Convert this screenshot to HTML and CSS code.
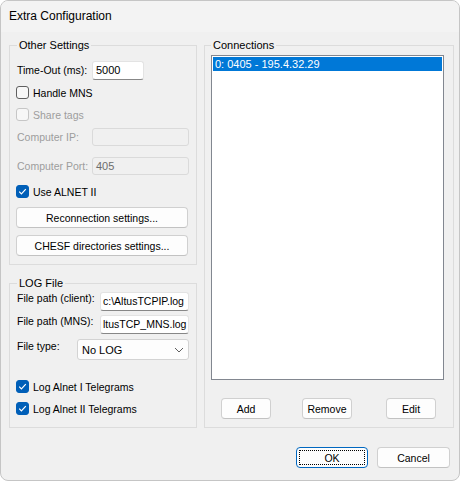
FILE: index.html
```html
<!DOCTYPE html>
<html lang="en">
<head>
  <meta charset="UTF-8" />
  <title>Extra Configuration</title>
  <link rel="stylesheet" href="styles.css">
</head>
<body>
  <div class="window">
    <div class="titlebar">Extra Configuration</div>

    <div class="content">
      <div class="left">
        <fieldset class="other">
          <legend>Other Settings</legend>
          <div class="row timeout">
            <span class="label">Time-Out (ms):</span>
            <div class="field short">5000</div>
          </div>
          <div class="checkrow mns">
            <span class="check"></span>
            <span>Handle MNS</span>
          </div>
          <div class="checkrow share disabled">
            <span class="check off"></span>
            <span>Share tags</span>
          </div>
          <div class="row ip disabled">
            <span class="label">Computer IP:</span>
            <div class="field wide off"></div>
          </div>
          <div class="row port disabled">
            <span class="label">Computer Port:</span>
            <div class="field wide off">405</div>
          </div>
          <div class="checkrow alnet">
            <span class="check on"><svg width="11" height="11" viewBox="0 0 11 11"><path d="M2.2 5.6 L4.4 7.8 L8.8 3.2" fill="none" stroke="#fff" stroke-width="1.2"/></svg></span>
            <span>Use ALNET II</span>
          </div>
          <div class="btn full reconnect">Reconnection settings...</div>
          <div class="btn full chesf">CHESF directories settings...</div>
        </fieldset>

        <fieldset class="log">
          <legend>LOG File</legend>
          <div class="row top client">
            <span class="label path">File path (client):</span>
            <div class="field path-field">c:\AltusTCPIP.log</div>
          </div>
          <div class="row top mnspath">
            <span class="label path">File path (MNS):</span>
            <div class="field path-field">ltusTCP_MNS.log</div>
          </div>
          <div class="row top type">
            <span class="label kind">File type:</span>
            <div class="select">
              <span>No LOG</span>
              <svg width="10" height="6" viewBox="0 0 10 6"><path d="M1 1 L5 5 L9 1" fill="none" stroke="#5f5f5f" stroke-width="1"/></svg>
            </div>
          </div>
          <div class="checkrow alnet1">
            <span class="check on"><svg width="11" height="11" viewBox="0 0 11 11"><path d="M2.2 5.6 L4.4 7.8 L8.8 3.2" fill="none" stroke="#fff" stroke-width="1.2"/></svg></span>
            <span>Log Alnet I Telegrams</span>
          </div>
          <div class="checkrow alnet2">
            <span class="check on"><svg width="11" height="11" viewBox="0 0 11 11"><path d="M2.2 5.6 L4.4 7.8 L8.8 3.2" fill="none" stroke="#fff" stroke-width="1.2"/></svg></span>
            <span>Log Alnet II Telegrams</span>
          </div>
        </fieldset>
      </div>

      <fieldset class="connections">
        <legend>Connections</legend>
        <div class="listbox">
          <div class="item selected">0: 0405 - 195.4.32.29</div>
        </div>
        <div class="list-buttons">
          <div class="btn small add">Add</div>
          <div class="btn small remove">Remove</div>
          <div class="btn small edit">Edit</div>
        </div>
      </fieldset>
    </div>

    <div class="footer">
      <div class="btn ok">OK</div>
      <div class="btn cancel">Cancel</div>
    </div>
  </div>
</body>
</html>
```

FILE: styles.css
```css
body {
  margin: 0;
  background: #fff;
  font-family: "Liberation Sans", Arial, sans-serif;
  font-size: 10.5px;
  color: #000;
}

.window {
  width: 460px;
  height: 481px;
  box-sizing: border-box;
  border: 1px solid #c5c5c5;
  border-radius: 8px;
  background: #f0f0f0;
  overflow: hidden;
}

.titlebar {
  height: 31px;
  line-height: 31px;
  padding-left: 8px;
  background: #f3f3f3;
  font-size: 12px;
}

.content {
  display: grid;
  grid-template-columns: 188px 250px;
  column-gap: 7px;
  padding: 7px 0 0 8px;
}

.left {
  display: flex;
  flex-direction: column;
  gap: 12px;
}

fieldset {
  margin: 0;
  padding: 0 7px;
  border: 1px solid #dcdcdc;
  box-sizing: border-box;
  min-width: 0;
}

legend {
  padding: 0 2px;
  line-height: 13px;
  font-size: 11px;
}

.other {
  height: 226px;
}

.log {
  height: 151px;
}

.connections {
  height: 389px;
  padding: 0 9px 0 6px;
}

/* rows */
.row {
  display: flex;
  align-items: center;
}

.row.top {
  align-items: flex-start;
}

.label {
  width: 75px;
  flex: none;
  line-height: 13px;
}

.label.path {
  width: 83px;
}

.label.kind {
  width: 60px;
  padding-top: 1px;
}

.disabled {
  color: #9d9d9d;
}

.field {
  height: 19px;
  box-sizing: border-box;
  padding-left: 3px;
  line-height: 17px;
  font-size: 11px;
  background: #fff;
  border: 1px solid #e3e3e3;
  border-bottom-color: #878787;
  border-radius: 3px;
  overflow: hidden;
  white-space: nowrap;
}

.field.short {
  width: 52px;
}

.field.wide {
  width: 97px;
  height: 18px;
  line-height: 16px;
}

.field.off {
  background: #f0f0f0;
  border-color: #dadada;
  color: #6d6d6d;
}

.field.path-field {
  width: 89px;
  padding-left: 2px;
  font-size: 10.5px;
}

.select {
  width: 112px;
  height: 21px;
  box-sizing: border-box;
  display: flex;
  align-items: center;
  justify-content: space-between;
  padding: 0 4px 0 4px;
  background: #fdfdfd;
  border: 1px solid #d3d3d3;
  border-radius: 3px;
}

.select span {
  font-size: 11px;
}

/* checkboxes */
.checkrow {
  display: flex;
  align-items: center;
  height: 13px;
}

.check {
  width: 13px;
  height: 13px;
  flex: none;
  box-sizing: border-box;
  margin-left: -1px;
  margin-right: 4px;
  display: flex;
  align-items: center;
  justify-content: center;
  background: #f7f7f7;
  border: 1px solid #5f5f5f;
  border-radius: 3px;
}

.check.off {
  border-color: #c6c6c6;
}

.check.on {
  background: #005fb8;
  border-color: #005fb8;
}

/* buttons */
.btn {
  height: 21px;
  box-sizing: border-box;
  display: flex;
  align-items: center;
  justify-content: center;
  background: #fdfdfd;
  border: 1px solid #d0d0d0;
  border-bottom-color: #c2c2c2;
  border-radius: 4px;
}

.btn.full {
  width: 172px;
  margin-left: -1px;
}

/* vertical spacing, other settings */
.timeout { margin-top: 9px; }
.mns { margin-top: 6px; }
.share { margin-top: 9px; }
.ip { margin-top: 7px; }
.port { margin-top: 11px; }
.alnet { margin-top: 10px; }
.reconnect { margin-top: 9px; }
.chesf { margin-top: 7px; }

/* vertical spacing, log file */
.client { margin-top: 2px; }
.mnspath { margin-top: 4px; }
.type { margin-top: 5px; }
.alnet1 { margin-top: 20px; }
.alnet2 { margin-top: 9px; }

/* connections */
.listbox {
  margin-top: 3px;
  height: 325px;
  box-sizing: border-box;
  padding: 1px;
  background: #fff;
  border: 1px solid #828790;
}

.item {
  height: 14px;
  line-height: 14px;
  padding-left: 2px;
  font-size: 11px;
}

.item.selected {
  background: #0078d7;
  color: #fff;
}

.list-buttons {
  display: flex;
  margin-top: 18px;
}

.btn.small {
  width: 50px;
}

.add { margin-left: 10px; }
.remove { margin-left: 31px; }
.edit { margin-left: 34px; }

/* footer */
.footer {
  display: flex;
  justify-content: flex-end;
  gap: 9px;
  padding: 19px 9px 0 0;
}

.ok {
  width: 72px;
  border-color: #0067c0;
  outline: 1px dotted #000;
  outline-offset: -4px;
}

.cancel {
  width: 73px;
}
```
